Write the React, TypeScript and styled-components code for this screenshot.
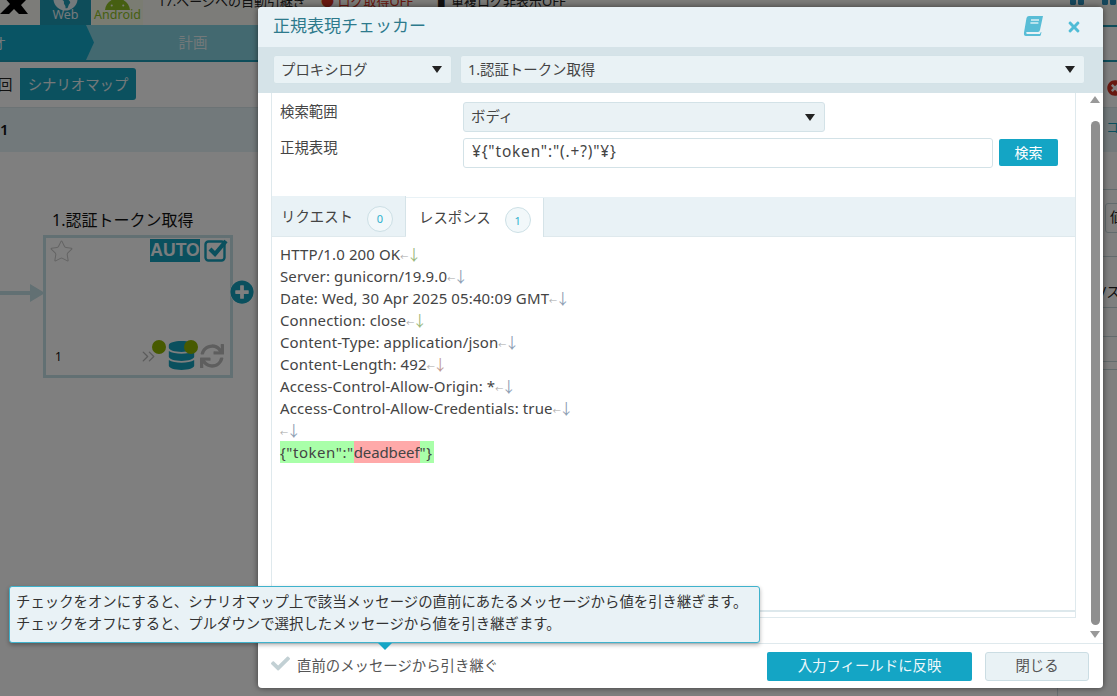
import React from "react";
import styled, { createGlobalStyle } from "styled-components";
import { FaAndroid, FaGlobeAmericas, FaCheck, FaDatabase, FaSync, FaPlusCircle, FaTimes, FaPause, FaTimesCircle, FaList } from "react-icons/fa";
import { Star as StarIcon, ChevronsRight } from "lucide-react";

const FONT = `"Noto Sans", "Noto Sans CJK JP", sans-serif`;

const Global = createGlobalStyle`
  html, body { margin: 0; padding: 0; width: 1117px; height: 696px; overflow: hidden; background: #fff; }
  body { font-family: ${FONT}; font-size: 14.4px; color: #444; }
  * { box-sizing: border-box; }
`;

const Stage = styled.div`
  position: relative; width: 1117px; height: 696px; overflow: hidden;
  display: flex; flex-direction: column; background: #fff;
`;
const TopBar = styled.header`
  height: 25px; flex: none; display: flex; align-items: flex-start; background: #f8f8f2; overflow: hidden;
`;
const Logo = styled.svg`width: 40px; height: 24px; flex: none;`;
const PlatformTab = styled.div<{ $active?: boolean; $top: number }>`
  width: 51px; height: 25px; flex: none; display: flex; flex-direction: column; align-items: center; justify-content: flex-end;
  margin-right: 1px; font-size: 12.5px; line-height: 15px; padding-bottom: 3px; position: relative; overflow: hidden;
  background: ${p => p.$active ? "#1c9ab4" : "#f4f8e4"};
  color: ${p => p.$active ? "#e8f4f8" : "#8cbf22"};
  svg { position: absolute; top: ${p => p.$top}px; left: 13px; font-size: 25px; }
`;
const TopMessage = styled.div`
  display: flex; margin: -7px 0 0 14px; font-size: 13px; line-height: 17px; white-space: nowrap; color: #222;
`;
const TopNote = styled.span<{ $w: number; $c?: string }>`
  width: ${p => p.$w}px; flex: none; color: ${p => p.$c || "#222"};
`;
const TopRight = styled.div`
  margin-left: auto; display: flex; gap: 16px; padding-right: 0; color: #2a8fb8; font-size: 16px; margin-top: -10px;
  svg { display: block; }
`;
const Stepper = styled.nav`
  height: 37px; flex: none; display: flex; background: #86d2e0; border-bottom: 2px solid #1c9ab4; position: relative;
  color: #e6f2f4; font-size: 14.4px;
`;
const StepActive = styled.div`
  width: 94px; flex: none; background: #12a8c8; clip-path: polygon(0 0, 86px 0, 94px 50%, 86px 100%, 0 100%);
  display: flex; align-items: center; color: #e6f2f4;
  span { margin-left: -8px; }
`;
const StepItem = styled.div`
  width: 198px; flex: none; display: flex; align-items: center; justify-content: center; padding-bottom: 2px;
`;
const StepEnd = styled.div`
  margin-left: auto; width: 60px; flex: none; background: #fff; border-top: 2px solid #1c9ab4;
`;
const SubNav = styled.div`
  height: 45px; flex: none; display: flex; align-items: flex-start; padding-top: 6px; background: #fff;
  font-size: 14.4px;
`;
const SubTab = styled.div<{ $active?: boolean }>`
  height: 32px; display: flex; align-items: center; border-radius: 0 3px 3px 0; padding-bottom: 2px;
  ${p => p.$active ? "width: 116px; justify-content: center;" : "width: 20px;"}
  background: ${p => p.$active ? "#16a2be" : "#fdfdfd"};
  color: ${p => p.$active ? "#e8f2f4" : "#222"};
  span { margin-left: -2px; }
`;
const SubRight = styled.div`
  margin-left: auto; width: 10px; margin-top: 11px; color: #d03020; font-size: 16px; overflow: hidden; flex: none;
`;
const SectionBar = styled.div`
  height: 45px; flex: none; display: flex; align-items: center; background: #e4f2f6; font-size: 15px; color: #111;
  border-top: 1px solid #d8e6ea; font-weight: 600;
  span { margin-top: -3px; }
`;
const SectionRight = styled.div`
  margin-left: auto; width: 13px; flex: none; overflow: hidden; display: flex; gap: 2px; color: #14a0bc; font-size: 13px; font-weight: 400; margin-top: -5px; white-space: nowrap;
`;
const Workspace = styled.main`flex: 1; display: flex; min-height: 0; background: #fff;`;
const Canvas = styled.section`flex: 1; position: relative;`;
const SidePanel = styled.aside`
  width: 60px; flex: none; border-left: 1px solid #d0dde2; display: flex; flex-direction: column; background: #fff;
`;
const NodeTitle = styled.div`
  position: absolute; left: 52px; top: 58px; font-size: 16px; line-height: 20px; color: #111; white-space: nowrap;
`;
const Node = styled.div`
  position: absolute; left: 43px; top: 83px; width: 190px; height: 143px; border: 3px solid #c4e0e6; background: #fff;
`;
const Star = styled(StarIcon)`position: absolute; left: 3px; top: 1px; color: #c8c8c8;`;
const AutoBadge = styled.div`
  position: absolute; left: 104px; top: 1px; width: 50px; height: 23px; background: #14a0bc; color: #f4fbfd;
  font: 700 17.5px/23px "Liberation Sans", sans-serif; text-align: center;
`;
const AutoCheck = styled.svg`position: absolute; left: 158px; top: 0; width: 24px; height: 24px;`;
const NodeIndex = styled.div`position: absolute; left: 9px; bottom: 10px; font-size: 12px; line-height: 16px; color: #111;`;
const Skip = styled(ChevronsRight)`position: absolute; left: 92px; bottom: 8px; color: #b8b8b8;`;
const Dot = styled.div<{ $left: number }>`
  position: absolute; left: ${p => p.$left}px; top: 102px; width: 14px; height: 14px; border-radius: 50%; background: #8fb400;
`;
const Db = styled(FaDatabase)`position: absolute; left: 121px; top: 103px; font-size: 29px; color: #14a0bc;`;
const Sync = styled(FaSync)`position: absolute; left: 154px; top: 106px; font-size: 24px; color: #bdbdbd;`;
const InArrow = styled.svg`position: absolute; left: 0; top: 130px; width: 46px; height: 22px;`;
const AddBtn = styled(FaPlusCircle)`
  position: absolute; left: 230px; top: 128px; font-size: 24px; color: #14a0bc; background: #fff; border-radius: 50%;
`;
const SideRow = styled.div<{ $h: number }>`
  height: ${p => p.$h}px; flex: none; border-bottom: 1px solid #c6d6da; background: #fff;
  padding-left: 47px; font-size: 14px; display: flex; align-items: center; color: #222; white-space: nowrap; overflow: hidden;
`;
const SideButton = styled.div`
  height: 30px; width: 40px; flex: none; border: 1px solid #c6d6da; border-radius: 3px; padding-left: 4px; line-height: 26px; margin-top: -10px;
`;
const SideText = styled.span`margin: 18px 0 0 -4px;`;

const Overlay = styled.div`position: absolute; inset: 0; background: rgba(0, 0, 0, 0.5);`;

const Modal = styled.div`
  position: absolute; left: 258px; top: 7px; width: 845px; height: 681px; display: flex; flex-direction: column;
  background: #fff; border-radius: 4px; box-shadow: 0 0 6px rgba(0,0,0,.55); overflow: hidden;
`;
const TitleBar = styled.div`
  height: 40px; flex: none; display: flex; align-items: center; padding: 0 21px 0 15px; background: #e9f2f6;
`;
const Title = styled.h1`
  flex: 1; margin: 0; font-size: 17px; font-weight: 400; color: #2d7a8c; line-height: 24px; padding-bottom: 2px;
`;
const BookIcon = styled.svg`width: 21px; height: 21px; margin: 0 22px 4px 0; flex: none;`;
const CloseIcon = styled(FaTimes)`font-size: 16px; color: #4fbcd6; flex: none;`;
const SelectBand = styled.div`
  height: 46px; flex: none; display: flex; gap: 8px; padding: 8px 18px 0 15px; background: #d5e3e8;
`;
const Select = styled.div<{ $w?: number; $grow?: boolean }>`
  height: 29px; display: flex; align-items: center; justify-content: space-between; padding: 0 9px 3px 7px;
  ${p => p.$w ? `width: ${p.$w}px; flex: none;` : ""} ${p => p.$grow ? "flex: 1;" : ""}
  background: #e9f2f5; border: 1px solid #d3e2e7; border-radius: 3px; color: #444; font-size: 14.4px;
  &::after { content: ""; width: 0; height: 0; border: 5px solid transparent; border-top: 7px solid #222; border-bottom: 0; margin-top: 3px; }
`;
const ModalBody = styled.div`flex: 1; min-height: 0; display: flex; padding-left: 13px;`;
const Pane = styled.div`flex: 1; min-width: 0; display: flex; flex-direction: column; border-left: 1px solid #dfe9ed; border-right: 1px solid #dfe9ed; border-bottom: 1px solid #dfe9ed; margin-bottom: 25px;`;
const Form = styled.div`
  height: 104px; flex: none; display: grid; grid-template-columns: 183px 530px 59px; grid-auto-rows: 30px;
  row-gap: 6px; column-gap: 0; padding: 9px 0 0 8px; align-content: start;
`;
const Label = styled.label`font-size: 14.4px; line-height: 20px; color: #444;`;
const ScopeField = styled(Select)`grid-column: 2 / 4; width: 362px; height: 30px; background: #eaf2f5;`;
const RegexInput = styled.input`
  width: 530px; height: 30px; padding: 0 8px 3px; border: 1px solid #d3e2e7; border-radius: 3px; background: #fff;
  font: 15.4px ${FONT}; letter-spacing: 0.85px; color: #444; outline: none;
`;
const SearchBtn = styled.button`
  width: 59px; height: 27px; margin: 1px 0 0 6px; border: 0; border-radius: 2px; background: #14a5c5; color: #fff;
  font: 14px ${FONT}; padding: 0 0 2px;
`;
const Tabs = styled.div`
  height: 40px; flex: none; display: flex; align-items: flex-end; background: #e9f2f6; border-bottom: 1px solid #dfe9ed;
`;
const Tab = styled.div<{ $active?: boolean; $w: number }>`
  width: ${p => p.$w}px; height: ${p => p.$active ? "39px" : "40px"}; flex: none; display: flex; align-items: center; gap: 14px; padding: 0 0 2px ${p => p.$active ? 13 : 9}px;
  background: ${p => p.$active ? "#fff" : "#e9f2f6"}; border-right: 1px solid #d5e3e8; font-size: 14.4px; color: #444;
  ${p => p.$active ? "margin-bottom: -1px;" : ""}
`;
const Count = styled.span`
  width: 26px; height: 26px; border-radius: 50%; border: 1px solid #ccdfe5; display: flex; align-items: center; justify-content: center;
  font-size: 11px; color: #2fb0cd; background: #f2f8fa; margin-top: 7px;
`;
const LogPane = styled.div`
  flex: 1; min-height: 0; padding: 6px 8px 0; font-size: 15px; letter-spacing: 0.12px; line-height: 22px; color: #444; border-bottom: 2px solid #dde8ec; margin-bottom: 5px;
`;
const LogLine = styled.div`height: 22px; white-space: nowrap;`;
const Eol = styled.span<{ $c?: string }>`
  color: #a8a8a8; font-size: 8px; margin-left: 0;
  i { font-style: normal; font-size: 15px; color: ${p => p.$c || "#8ea0b4"}; margin-left: -2px; }
`;
const Hit = styled.span<{ $k: "g" | "r" }>`
  display: inline-block; height: 22px;
  background: ${p => p.$k === "g" ? "#a9ffa9" : "#ffa9a9"};
  letter-spacing: ${p => p.$k === "g" ? "0.55px" : "-0.1px"};
`;
const HitEnd = styled(Hit)`padding-right: 2px;`;
const Scroll = styled.div`
  width: 27px; flex: none; position: relative; display: flex; flex-direction: column; align-items: center; padding: 3px 0 0 11px;
`;
const ArrowUp = styled.div`width: 0; height: 0; border: 5px solid transparent; border-bottom: 7px solid #999; border-top: 0;`;
const ArrowDown = styled.div`width: 0; height: 0; border: 5px solid transparent; border-top: 7px solid #999; border-bottom: 0; margin-top: 6px;`;
const Thumb = styled.div`width: 9px; height: 504px; margin-top: 18px; border-radius: 5px; background: #8f8f8f;`;
const Footer = styled.footer`
  height: 45px; flex: none; display: flex; align-items: center; border-top: 1px solid #dfe9ed; padding: 0 14px 0 13px;
`;
const FollowCheck = styled.div`
  flex: 1; display: flex; align-items: center; gap: 7px; color: #555; font-size: 14.4px; margin-top: -3px;
  svg { font-size: 19px; color: #c2d0d4; margin-top: -2px; }
`;
const PrimaryBtn = styled.button`
  width: 205px; height: 29px; border: 0; border-radius: 2px; background: #14a5c5; color: #eef8fb; font: 14.4px ${FONT}; padding: 0 0 4px; margin-right: 13px;
`;
const SecondaryBtn = styled.button`
  width: 104px; height: 29px; border: 1px solid #cbdde3; border-radius: 3px; background: #e9f2f5; color: #555; font: 14.4px ${FONT}; padding: 0 0 4px;
`;
const Tooltip = styled.div`
  position: absolute; left: 9px; top: 586px; width: 751px; height: 57px; padding: 4px 6px 0; background: #e9f2f6; border: 1px solid #3fb2cc; border-radius: 3px;
  font-size: 14.4px; line-height: 22px; color: #333; white-space: nowrap; box-shadow: 0 2px 4px rgba(0,0,0,.3);
  &::after { content: ""; position: absolute; left: 368px; bottom: -8px; width: 0; height: 0; border: 7px solid transparent; border-top: 7px solid #14a5c5; border-bottom: 0; }
`;

const LOG: [string, string][] = [
  ["HTTP/1.0 200 OK", "#9ab87c"],
  ["Server: gunicorn/19.9.0", "#8ea0b4"],
  ["Date: Wed, 30 Apr 2025 05:40:09 GMT", "#8ea0b4"],
  ["Connection: close", "#9ab87c"],
  ["Content-Type: application/json", "#8ea0b4"],
  ["Content-Length: 492", "#c09a94"],
  ["Access-Control-Allow-Origin: *", "#8ea0b4"],
  ["Access-Control-Allow-Credentials: true", "#8ea0b4"],
  ["", "#8ea0b4"],
];

export default function App() {
  return (
    <Stage>
      <Global />
      <TopBar>
        <Logo viewBox="0 0 40 24"><path d="M0 14 L10 4 L3 -4 L12 -4 L16 0 L21 -4 L30 -4 L21 5 L28 14 L19 14 L14 9 L9 14 Z" fill="#000" /></Logo>
        <PlatformTab $active $top={-14}><FaGlobeAmericas />Web</PlatformTab>
        <PlatformTab $top={-8}><FaAndroid />Android</PlatformTab>
        <TopMessage>
          <TopNote $w={163}>17.ページへの自動引継ぎ</TopNote>
          <TopNote $w={117} $c="#d03020">● ログ取得OFF</TopNote>
          <TopNote $w={140}>▌重複ログ非表示OFF</TopNote>
        </TopMessage>
        <TopRight><FaPause /><FaPause /></TopRight>
      </TopBar>
      <Stepper>
        <StepActive><span>オ</span></StepActive>
        <StepItem>計画</StepItem>
        <StepEnd />
      </Stepper>
      <SubNav>
        <SubTab><span>回</span></SubTab>
        <SubTab $active>シナリオマップ</SubTab>
        <SubRight><FaTimesCircle /></SubRight>
      </SubNav>
      <SectionBar>
        <span>1</span>
        <SectionRight><FaList /><span>コ</span></SectionRight>
      </SectionBar>
      <Workspace>
        <Canvas>
          <NodeTitle>1.認証トークン取得</NodeTitle>
          <InArrow viewBox="0 0 46 22"><path d="M0 9 H30 V2 L45 11 L30 20 V13 H0 Z" fill="#c4e0e6" /></InArrow>
          <Node>
            <Star size={25} strokeWidth={1} />
            <AutoBadge>AUTO</AutoBadge>
            <AutoCheck viewBox="0 0 24 24">
              <rect x="1.5" y="3.5" width="19" height="19" rx="3" fill="none" stroke="#14a0bc" strokeWidth="2.4" />
              <path d="M6 11 L11 16 L22 3" fill="none" stroke="#14a0bc" strokeWidth="4.2" />
            </AutoCheck>
            <NodeIndex>1</NodeIndex>
            <Skip size={21} strokeWidth={1.6} />
            <Db />
            <Dot $left={106} />
            <Dot $left={138} />
            <Sync />
          </Node>
          <AddBtn />
        </Canvas>
        <SidePanel>
          <SideRow $h={38} />
          <SideRow $h={67}><SideButton>値</SideButton></SideRow>
          <SideRow $h={51}><SideText>/ス</SideText></SideRow>
          <SideRow $h={29} />
          <SideRow $h={25} />
          <SideRow $h={8} />
        </SidePanel>
      </Workspace>
      <Overlay />
      <Modal>
        <TitleBar>
          <Title>正規表現チェッカー</Title>
          <BookIcon viewBox="0 0 21 21">
            <path d="M6 1 H20 L17 15 Q16.5 17 15 17 H4 Q3 17 3.2 18 Q3.4 19 4.5 19 H17 L17.5 17.5 L18.5 17 L17.8 20 Q17.6 21 16.5 21 H3 Q0.5 21 1 17.5 L3.5 3 Q4 1 6 1 Z" fill="#58bdd6" />
            <path d="M8 5 H16 M7.4 8 H15.4" stroke="#d8eff5" strokeWidth="1.4" />
          </BookIcon>
          <CloseIcon />
        </TitleBar>
        <SelectBand>
          <Select $w={179}>プロキシログ</Select>
          <Select $grow>1.認証トークン取得</Select>
        </SelectBand>
        <ModalBody>
          <Pane>
            <Form>
              <Label>検索範囲</Label>
              <ScopeField>ボディ</ScopeField>
              <Label>正規表現</Label>
              <RegexInput readOnly value={'¥{"token":"(.+?)"¥}'} />
              <SearchBtn>検索</SearchBtn>
            </Form>
            <Tabs>
              <Tab $w={134}>リクエスト<Count>0</Count></Tab>
              <Tab $active $w={138}>レスポンス<Count>1</Count></Tab>
            </Tabs>
            <LogPane>
              {LOG.map(([t, c], i) => (
                <LogLine key={i}>{t}<Eol $c={c}>←<i>↓</i></Eol></LogLine>
              ))}
              <LogLine>
                <Hit $k="g">{'{"token":"'}</Hit><Hit $k="r">deadbeef</Hit><HitEnd $k="g">{'"}'}</HitEnd>
              </LogLine>
            </LogPane>
          </Pane>
          <Scroll>
            <ArrowUp />
            <Thumb />
            <ArrowDown />
          </Scroll>
        </ModalBody>
        <Footer>
          <FollowCheck><FaCheck />直前のメッセージから引き継ぐ</FollowCheck>
          <PrimaryBtn>入力フィールドに反映</PrimaryBtn>
          <SecondaryBtn>閉じる</SecondaryBtn>
        </Footer>
      </Modal>
      <Tooltip>
        チェックをオンにすると、シナリオマップ上で該当メッセージの直前にあたるメッセージから値を引き継ぎます。<br />
        チェックをオフにすると、プルダウンで選択したメッセージから値を引き継ぎます。
      </Tooltip>
    </Stage>
  );
}
